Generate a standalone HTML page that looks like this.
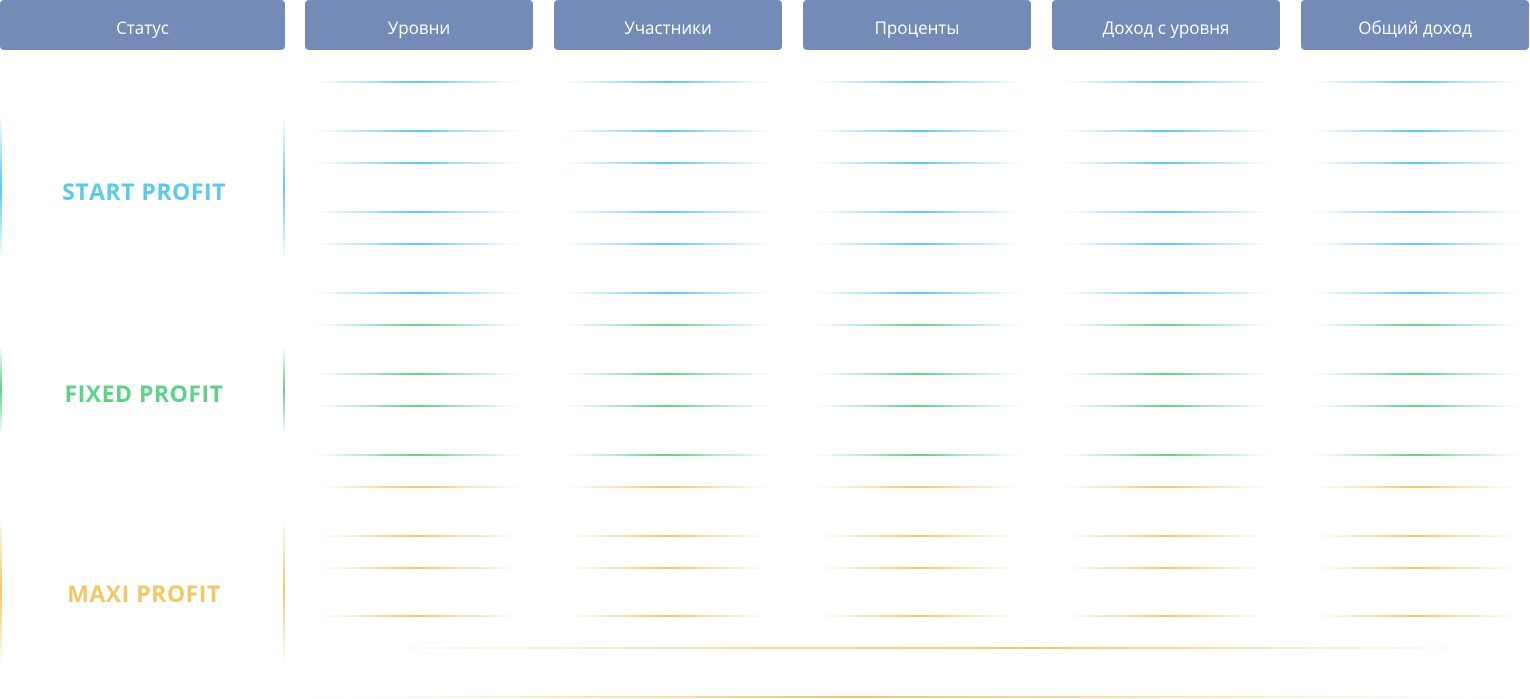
<!DOCTYPE html>
<html><head><meta charset="utf-8"><style>
body{margin:0;width:1530px;height:699px;background:#fff;position:relative;overflow:hidden;font-family:"Open Sans","Liberation Sans",sans-serif}
.h{position:absolute;top:0;height:50px;background:#738bb6;border-radius:4px;color:#fff;font-size:17px;line-height:55px;text-align:center}
.l{position:absolute;height:2px;border-radius:50%}
.v{position:absolute;width:2px}
.t{position:absolute;left:0;width:288px;text-align:center;font-weight:bold;font-size:23px;letter-spacing:0.5px}
</style></head><body>
<div class="h" style="left:0;width:285px">Статус</div>
<div class="h" style="left:305px;width:228px">Уровни</div>
<div class="h" style="left:554px;width:228px">Участники</div>
<div class="h" style="left:803px;width:228px">Проценты</div>
<div class="h" style="left:1052px;width:228px">Доход с уровня</div>
<div class="h" style="left:1301px;width:228px">Общий доход</div>

<div class="v" style="left:0;top:115px;height:145px;background:linear-gradient(transparent,#5bcaec,transparent)"></div>
<div class="v" style="left:283px;top:115px;height:145px;background:linear-gradient(transparent,#5bcaec,transparent)"></div>
<div class="v" style="left:0;top:345px;height:90px;background:linear-gradient(transparent,#5ed28a,transparent)"></div>
<div class="v" style="left:283px;top:345px;height:90px;background:linear-gradient(transparent,#5ed28a,transparent)"></div>
<div class="v" style="left:0;top:515px;height:150px;background:linear-gradient(transparent,#f2c866,transparent)"></div>
<div class="v" style="left:283px;top:515px;height:150px;background:linear-gradient(transparent,#f2c866,transparent)"></div>

<div class="t" style="top:175px;color:#5bcaec">START PROFIT</div>
<div class="t" style="top:377px;color:#5ed28a">FIXED PROFIT</div>
<div class="t" style="top:577px;color:#f2c866">MAXI PROFIT</div>

<div id="lines"></div>
<script>
var rows=[[82,'#5bcaec'],[131,'#5bcaec'],[163,'#5bcaec'],[212,'#5bcaec'],[244,'#5bcaec'],[293,'#5bcaec'],[325,'#5ed28a'],[374,'#5ed28a'],[406,'#5ed28a'],[455,'#5ed28a'],[487,'#f2c866'],[536,'#f2c866'],[568,'#f2c866'],[616,'#f2c866']];
var cols=[308,558,808,1056,1306];
var h='';
rows.forEach(function(r){cols.forEach(function(c){h+='<div class="l" style="left:'+c+'px;width:220px;top:'+(r[0]-1)+'px;background:linear-gradient(90deg,transparent,'+r[1]+' 50%,transparent)"></div>';});});
h+='<div class="l" style="left:300px;width:1225px;top:647px;background:linear-gradient(90deg,transparent,#f2c866 60%,transparent)"></div>';
h+='<div class="l" style="left:300px;width:1225px;top:696px;background:linear-gradient(90deg,transparent,#f2c866 45%,transparent)"></div>';
document.getElementById('lines').innerHTML=h;
</script>
</body></html>
